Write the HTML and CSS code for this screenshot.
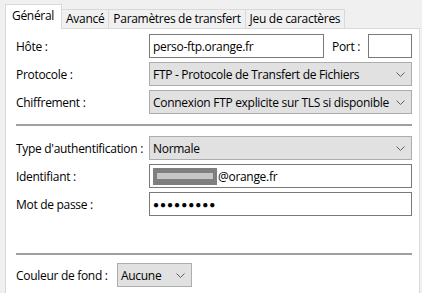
FILE: index.html
```html
<!DOCTYPE html>
<html lang="fr">
<head>
<meta charset="utf-8">
<link rel="stylesheet" href="styles.css">
</head>
<body>
<div class="tabs">
  <div class="tab active">Général</div>
  <div class="tab">Avancé</div>
  <div class="tab">Paramètres de transfert</div>
  <div class="tab">Jeu de caractères</div>
</div>
<div class="panel">
  <div class="group g1">
    <div class="row">
      <span class="label">Hôte :</span>
      <div class="host">
        <div class="input host-input">perso-ftp.orange.fr</div>
        <span class="port-label">Port :</span>
        <div class="input port-input"></div>
      </div>
    </div>
    <div class="row">
      <span class="label">Protocole :</span>
      <div class="select">FTP - Protocole de Transfert de Fichiers<svg class="chev" width="9" height="5" viewBox="0 0 9 5"><path d="M0.5 0.5 L4.5 4.5 L8.5 0.5" fill="none" stroke="#606060" stroke-width="1"/></svg></div>
    </div>
    <div class="row">
      <span class="label">Chiffrement :</span>
      <div class="select">Connexion FTP explicite sur TLS si disponible<svg class="chev" width="9" height="5" viewBox="0 0 9 5"><path d="M0.5 0.5 L4.5 4.5 L8.5 0.5" fill="none" stroke="#606060" stroke-width="1"/></svg></div>
    </div>
  </div>
  <div class="sep"></div>
  <div class="group g2">
    <div class="row">
      <span class="label">Type d'authentification :</span>
      <div class="select">Normale<svg class="chev" width="9" height="5" viewBox="0 0 9 5"><path d="M0.5 0.5 L4.5 4.5 L8.5 0.5" fill="none" stroke="#606060" stroke-width="1"/></svg></div>
    </div>
    <div class="row">
      <span class="label">Identifiant :</span>
      <div class="input"><span class="redact"><span class="redact-bar"></span></span>@orange.fr</div>
    </div>
    <div class="row">
      <span class="label">Mot de passe :</span>
      <div class="input pwd">●●●●●●●●●</div>
    </div>
  </div>
  <div class="sep sep2"></div>
  <div class="bg-row">
    <span class="label">Couleur de fond :</span>
    <div class="select small">Aucune<svg class="chev" width="9" height="5" viewBox="0 0 9 5"><path d="M0.5 0.5 L4.5 4.5 L8.5 0.5" fill="none" stroke="#606060" stroke-width="1"/></svg></div>
  </div>
</div>
</body>
</html>
```
FILE: styles.css
```css
html, body {
  margin: 0;
  padding: 0;
}
body {
  width: 422px;
  height: 293px;
  overflow: hidden;
  background: #f0f0f0;
  font-family: "Open Sans", "Noto Sans", "Liberation Sans", sans-serif;
  font-size: 12px;
  letter-spacing: -0.3px;
  color: #000;
}
.tabs {
  display: flex;
  align-items: flex-end;
  height: 28px;
  padding-left: 5px;
  position: relative;
  z-index: 1;
}
.tab {
  height: 19px;
  line-height: 18px;
  padding: 0 4px;
  border: 1px solid #d9d9d9;
  border-bottom: none;
  border-left: none;
  background: #f0f0f0;
  box-sizing: border-box;
  white-space: nowrap;
}
.tab.active {
  height: 25px;
  margin-bottom: -1px;
  background: #fff;
  border-left: 1px solid #d9d9d9;
  line-height: 22px;
  padding: 0 7px 0 6px;
}
.panel {
  margin-left: 5px;
  width: 415px;
  height: 266px;
  box-sizing: border-box;
  border: 1px solid #d9d9d9;
  border-bottom: none;
  background: #fff;
  padding: 5px 7px 0 10px;
}
.group {
  display: flex;
  flex-direction: column;
  gap: 4px;
}
.row {
  display: grid;
  grid-template-columns: 133px 263px;
  align-items: center;
  height: 24px;
}
.label {
  white-space: nowrap;
}
.host {
  display: flex;
  align-items: center;
}
.input {
  height: 24px;
  box-sizing: border-box;
  border: 1px solid #7a7a7a;
  background: #fff;
  padding: 0 3px;
  display: flex;
  align-items: center;
  white-space: nowrap;
}
.host-input {
  width: 175px;
}
.port-label {
  margin-left: 8px;
  width: 36px;
}
.port-input {
  width: 44px;
}
.select {
  height: 24px;
  box-sizing: border-box;
  border: 1px solid #adadad;
  background: #e1e1e1;
  padding: 0 3px;
  display: flex;
  align-items: center;
  justify-content: space-between;
  white-space: nowrap;
}
.chev {
  margin-right: 3px;
  flex: none;
}
.sep {
  height: 0;
  border-top: 2px solid #a0a0a0;
  margin: 10px 0 10px 0;
  width: 396px;
}
.sep2 {
  margin-top: 37px;
  margin-bottom: 8px;
}
.redact {
  width: 64px;
  height: 17px;
  background: #7f7f7f;
  display: flex;
  align-items: center;
  justify-content: center;
  margin-right: 1px;
}
.redact-bar {
  width: 56px;
  height: 6px;
  background: #c6c6c6;
}
.pwd {
  font-size: 10px;
  letter-spacing: 1px;
}
.bg-row {
  display: flex;
  align-items: center;
  height: 24px;
}
.bg-row .label {
  width: 101px;
}
.select.small {
  width: 75px;
}
```
